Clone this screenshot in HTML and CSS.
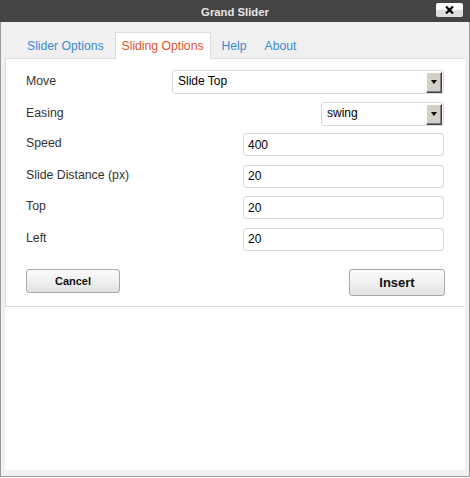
FILE: index.html
```html
<!DOCTYPE html>
<html>
<head>
<meta charset="utf-8">
<title>Grand Slider</title>
<link rel="stylesheet" href="styles.css">
</head>
<body>
<div class="window">
  <div class="titlebar">
    <span class="title">Grand Slider</span>
    <button class="close" type="button" aria-label="Close">
      <svg width="9" height="8" viewBox="0 0 9 8"><path d="M1 0.5 L8 7.5 M8 0.5 L1 7.5" stroke="#000" stroke-width="2.2" fill="none"/></svg>
    </button>
  </div>
  <div class="body">
    <ul class="tabs">
      <li class="tab">Slider Options</li>
      <li class="tab active">Sliding Options</li>
      <li class="tab">Help</li>
      <li class="tab">About</li>
    </ul>
    <div class="panel">
      <div class="tabbox">
        <div class="row row-sel row-move">
          <label class="lbl">Move</label>
          <div class="select sel-move"><span class="sel-text">Slide Top</span><span class="arrow"><i class="tri"></i></span></div>
        </div>
        <div class="row row-sel row-easing">
          <label class="lbl">Easing</label>
          <div class="select sel-easing"><span class="sel-text">swing</span><span class="arrow"><i class="tri"></i></span></div>
        </div>
        <div class="row row-in">
          <label class="lbl">Speed</label>
          <input class="field" type="text" value="400">
        </div>
        <div class="row row-in">
          <label class="lbl">Slide Distance (px)</label>
          <input class="field" type="text" value="20">
        </div>
        <div class="row row-in">
          <label class="lbl">Top</label>
          <input class="field" type="text" value="20">
        </div>
        <div class="row row-in last">
          <label class="lbl">Left</label>
          <input class="field" type="text" value="20">
        </div>
        <div class="actions">
          <button class="btn cancel" type="button">Cancel</button>
          <button class="btn insert" type="button">Insert</button>
        </div>
      </div>
    </div>
  </div>
</div>
</body>
</html>
```

FILE: styles.css
```css
* { box-sizing: border-box; }
html, body { margin: 0; padding: 0; background: #fff; }
body { font-family: "Liberation Sans", Arial, sans-serif; }

.window {
  width: 470px;
  height: 477px;
  display: flex;
  flex-direction: column;
}

.titlebar {
  position: relative;
  height: 22px;
  background: #444444;
  text-align: center;
  line-height: 22px;
}
.title {
  color: #e6e6e6;
  font-weight: bold;
  font-size: 11.3px;
}
.close {
  position: absolute;
  right: 7px;
  top: 3px;
  width: 27px;
  height: 14px;
  padding: 0;
  border: none;
  border-radius: 2px;
  background: linear-gradient(to bottom, #ffffff 0%, #ffffff 45%, #dedede 50%, #dedede 100%);
  display: flex;
  align-items: center;
  justify-content: center;
}
.close svg { display: block; }

.body {
  flex: 1;
  display: flex;
  flex-direction: column;
  background: #f0f0f0;
  border: 1px solid #9a9a9a;
  border-top: none;
  padding: 10px 4px 6px 4px;
}

.tabs {
  list-style: none;
  margin: 0;
  padding: 0 0 0 15px;
  height: 26px;
  display: flex;
}
.tab {
  height: 26px;
  line-height: 26px;
  padding: 0 6px;
  margin-right: 4px;
  border: 1px solid transparent;
  border-bottom: none;
  font-size: 12.2px;
  color: #3a8ad0;
}
.tab.active {
  position: relative;
  z-index: 1;
  height: 27px;
  margin-bottom: -1px;
  background: #fff;
  border-color: #dcdcdc;
  color: #e5502b;
}

.panel {
  flex: 1;
  background: #fff;
}

.tabbox {
  border-top: 1px solid #dcdcdc;
  border-left: 1px solid #dcdcdc;
  border-bottom: 1px solid #dcdcdc;
  padding: 11px 21px 10px 20px;
}

.row {
  display: flex;
  align-items: center;
  justify-content: space-between;
}
.row-sel { height: 24px; }
.row-move { margin-bottom: 8px; }
.row-easing { margin-bottom: 7px; }
.row-in { height: 23px; margin-bottom: 8.67px; }
.row-in.last { margin-bottom: 18px; }

.lbl {
  font-size: 12.3px;
  color: #333;
  padding-bottom: 3px;
}

.select {
  height: 24px;
  border: 1px solid #d9d9d9;
  border-radius: 3px;
  display: flex;
  align-items: flex-start;
  background: #fff;
}
.sel-move { width: 272px; }
.sel-easing { width: 123px; }
.sel-text {
  flex: 1;
  font-size: 12px;
  color: #000;
  padding-left: 5px;
  line-height: 21px;
}
.arrow {
  width: 16px;
  height: 21px;
  margin: 1px 1px 0 0;
  background: #d4d0c8;
  border: 1px solid;
  border-color: #ffffff #404040 #404040 #ffffff;
  box-shadow: inset -1px -1px 0 #808080;
  display: flex;
  align-items: center;
  justify-content: center;
}
.tri {
  width: 0;
  height: 0;
  border-left: 3.5px solid transparent;
  border-right: 3.5px solid transparent;
  border-top: 4px solid #000;
  margin-bottom: 1px;
}

.field {
  width: 201px;
  height: 23px;
  border: 1px solid #d9d9d9;
  border-radius: 3px;
  padding: 0 0 0 4px;
  font-family: "Liberation Sans", Arial, sans-serif;
  font-size: 12px;
  color: #000;
  outline: none;
}

.actions {
  display: flex;
  justify-content: space-between;
  align-items: flex-start;
}
.btn {
  font-family: "Liberation Sans", Arial, sans-serif;
  font-weight: bold;
  color: #111;
  border: 1px solid #a9a9a9;
  border-radius: 3px;
  background: linear-gradient(to bottom, #fbfbfb 0%, #f0f0f0 50%, #e2e2e2 100%);
  padding: 0;
}
.cancel {
  width: 94px;
  height: 24px;
  font-size: 11px;
}
.insert {
  width: 96px;
  height: 27px;
  font-size: 13px;
  margin-right: -1px;
}
```
